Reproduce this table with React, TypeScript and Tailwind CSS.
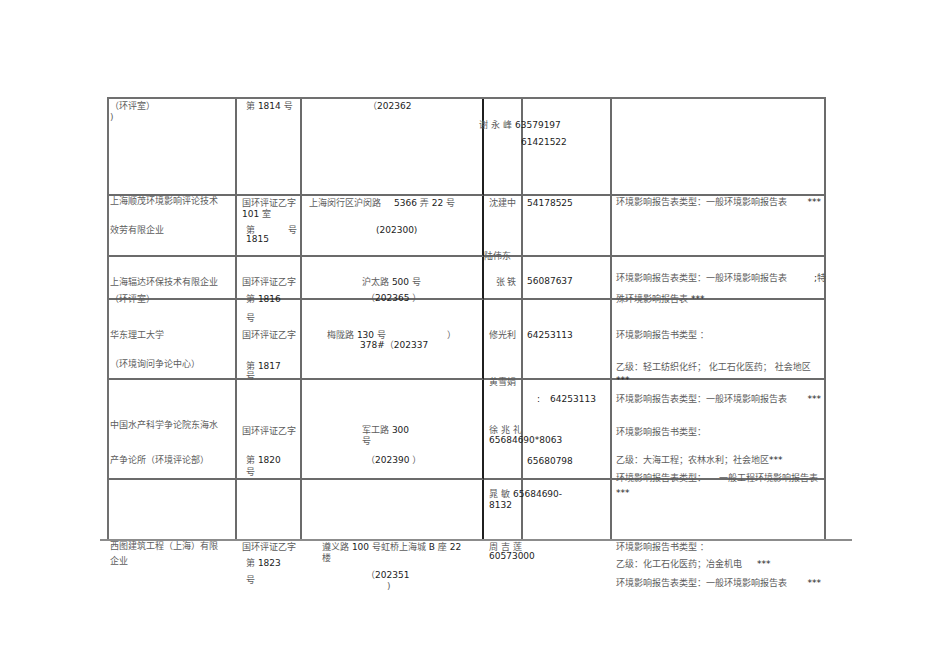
import React from "react";

const N = ({ children }: { children: React.ReactNode }) => (
  <span className="text-[#1c1c1c]">{children}</span>
);

const c = "border-r-2 border-b-2 border-[#6b6b6b]";
const c3 = "border-r-2 border-b-2 border-b-[#6b6b6b] border-r-[#1f1f1f]";
const r6 = "border-r-2 border-[#6b6b6b]";
const r63 = "border-r-2 border-r-[#1f1f1f]";

export default function App() {
  return (
    <div className="w-[950px] h-[672px] bg-white overflow-hidden font-['DejaVu_Sans','Noto_Sans_CJK_SC',sans-serif] text-[9px] leading-[11px] text-[#5c5c5c] whitespace-nowrap">
      <div className="pt-[97px] pl-[107px]">
        <div className="w-[719px] border-l-2 border-t-2 border-[#707070] grid grid-cols-[128px_65px_182px_39px_89px_214px] grid-rows-[97px_61px_43px_80px_100px_59px]">
          {/* Row 1 */}
          <div className={c}>
            <div className="pl-[1px] pt-[2px]">
              <div>（环评室）</div>
              <div>)</div>
            </div>
          </div>
          <div className={c}>
            <div className="pl-[9px] pt-[2px]">
              第 <N>1814</N> 号
            </div>
          </div>
          <div className={c3}>
            <div className="pl-[66px] pt-[2px]">
              （<N>202362</N>
            </div>
          </div>
          <div className={c}>
            <div className="ml-[-5px] mt-[21px] flex">
              <span className="w-[42px] tracking-[3px]">谢永峰</span>
              <N>63579197</N>
            </div>
            <div className="ml-[37px] mt-[6px]">
              <N>61421522</N>
            </div>
          </div>
          <div className={c}></div>
          <div className={c}></div>

          {/* Row 2 */}
          <div className={c}>
            <div className="pl-[1px]">
              <div>上海顺茂环境影响评论技术</div>
              <div className="mt-[18px]">效劳有限企业</div>
            </div>
          </div>
          <div className={c}>
            <div className="pl-[5px] pt-[2px]">
              <div>国环评证乙字</div>
              <div>
                <N>101</N> 室
              </div>
              <div className="ml-[4px] mt-[5px] w-[51px] flex justify-between">
                <span>第</span>
                <span>号</span>
              </div>
              <div className="ml-[4px] mt-[-2px]">
                <N>1815</N>
              </div>
            </div>
          </div>
          <div className={c3}>
            <div className="pt-[2px]">
              <div className="pl-[7px] flex">
                <span>上海闵行区沪闵路</span>
                <span className="ml-[13px]">
                  <N>5366</N> 弄 <N>22</N> 号
                </span>
              </div>
              <div className="pl-[74px] mt-[16px]">
                <N>(202300)</N>
              </div>
            </div>
          </div>
          <div className={c}>
            <div className="pl-[5px] pt-[2px]">沈建中</div>
          </div>
          <div className={c}>
            <div className="pl-[4px] pt-[2px]">
              <N>54178525</N>
            </div>
          </div>
          <div className={c}>
            <div className="pl-[4px] pt-[1px]">
              <div className="w-[205px] flex justify-between">
                <span>环境影响报告表类型：一般环境影响报告表</span>
                <N>***</N>
              </div>
            </div>
          </div>

          {/* Row 3 */}
          <div className={c}>
            <div className="pl-[1px] pt-[20px]">
              <div>上海辐达环保技术有限企业</div>
              <div className="mt-[6px]">（环评室）</div>
            </div>
          </div>
          <div className={c}>
            <div className="pl-[5px] pt-[20px]">
              <div>国环评证乙字</div>
              <div className="ml-[4px] mt-[6px]">
                第 <N>1816</N>
              </div>
            </div>
          </div>
          <div className={c3}>
            <div className="pt-[20px]">
              <div className="pl-[60px]">
                沪太路 <N>500</N> 号
              </div>
              <div className="pl-[64px] mt-[5px]">
                （<N>202365</N> ）
              </div>
            </div>
          </div>
          <div className={c}>
            <div className="mt-[-6px]">陆伟东</div>
            <div className="pl-[12px] mt-[15px] tracking-[2px]">张铁</div>
          </div>
          <div className={c}>
            <div className="pl-[4px] pt-[19px]">
              <N>56087637</N>
            </div>
          </div>
          <div className={c}>
            <div className="pl-[4px] pt-[16px]">
              <div className="w-[210px] flex justify-between">
                <span>环境影响报告表类型：一般环境影响报告表</span>
                <span>
                  <N>;</N>特
                </span>
              </div>
              <div className="mt-[10px]">
                殊环境影响报告表 <N>***</N>
              </div>
            </div>
          </div>

          {/* Row 4 */}
          <div className={c}>
            <div className="pl-[1px] pt-[30px]">
              <div>华东理工大学</div>
              <div className="mt-[18px]">（环境询问争论中心）</div>
            </div>
          </div>
          <div className={c}>
            <div className="pl-[9px] pt-[13px]">
              <div>号</div>
              <div className="ml-[-4px] mt-[6px]">国环评证乙字</div>
              <div className="mt-[20px]">
                第 <N>1817</N>
              </div>
              <div className="mt-[-1px]">号</div>
            </div>
          </div>
          <div className={c3}>
            <div className="pt-[30px]">
              <div className="ml-[25px] w-[129px] flex justify-between">
                <span>
                  梅陇路 <N>130</N> 号
                </span>
                <span>）</span>
              </div>
              <div className="pl-[58px] mt-[-1px]">
                <N>378#</N>（<N>202337</N>
              </div>
            </div>
          </div>
          <div className={c}>
            <div className="pl-[5px] pt-[30px]">修光利</div>
          </div>
          <div className={c}>
            <div className="pl-[4px] pt-[30px]">
              <N>64253113</N>
            </div>
          </div>
          <div className={c}>
            <div className="pl-[4px] pt-[30px]">
              <div>环境影响报告书类型 ：</div>
              <div className="mt-[21px]">乙级：轻工纺织化纤； 化工石化医药； 社会地区</div>
              <div className="mt-[2px]">
                <N>***</N>
              </div>
            </div>
          </div>

          {/* Row 5 */}
          <div className={c}>
            <div className="pl-[1px] pt-[40px]">
              <div>中国水产科学争论院东海水</div>
              <div className="mt-[24px]">产争论所（环境评论部）</div>
            </div>
          </div>
          <div className={c}>
            <div className="pl-[5px] pt-[46px]">
              <div>国环评证乙字</div>
              <div className="ml-[4px] mt-[18px]">
                第 <N>1820</N>
              </div>
              <div className="ml-[4px] mt-[1px]">号</div>
            </div>
          </div>
          <div className={c3}>
            <div className="pl-[60px] pt-[45px]">
              <div>
                军工路 <N>300</N>
              </div>
              <div>号</div>
              <div className="ml-[4px] mt-[8px]">
                （<N>202390</N> ）
              </div>
            </div>
          </div>
          <div className={c}>
            <div className="pl-[5px]">
              <div className="mt-[-3px]">黄雪娟</div>
              <div className="mt-[37px] tracking-[3px]">徐兆礼</div>
              <div className="mt-[-1px]">
                <N>65684690*8063</N>
              </div>
            </div>
          </div>
          <div className={c}>
            <div className="pt-[14px]">
              <div className="pl-[14px] flex">
                <N>:</N>
                <span className="ml-[10px]">
                  <N>64253113</N>
                </span>
              </div>
              <div className="pl-[4px] mt-[51px]">
                <N>65680798</N>
              </div>
            </div>
          </div>
          <div className={c}>
            <div className="pl-[4px] pt-[14px]">
              <div className="w-[205px] flex justify-between">
                <span>环境影响报告表类型：一般环境影响报告表</span>
                <N>***</N>
              </div>
              <div className="mt-[22px]">环境影响报告书类型：</div>
              <div className="mt-[17px]">
                乙级：大海工程；农林水利；社会地区<N>***</N>
              </div>
              <div className="mt-[7px] flex">
                <span>环境影响报告表类型：</span>
                <span className="ml-[13px]">一般工程环境影响报告表</span>
              </div>
            </div>
          </div>

          {/* Row 6 */}
          <div className={r6}></div>
          <div className={r6}></div>
          <div className={r63}></div>
          <div className={r6}>
            <div className="pl-[5px] pt-[9px]">
              <div className="flex">
                <span className="w-[29px] tracking-[3px]">晁敏</span>
                <N>65684690-</N>
              </div>
              <div>
                <N>8132</N>
              </div>
            </div>
          </div>
          <div className={r6}></div>
          <div className={r6}>
            <div className="pl-[4px] pt-[8px]">
              <N>***</N>
            </div>
          </div>
        </div>

        <div className="ml-[-7px] h-[2px] w-[752px] bg-[#8c8c8c]" />

        <div className="ml-[2px] grid grid-cols-[128px_65px_182px_39px_89px_214px]">
          <div>
            <div className="pl-[1px]">
              <div>西图建筑工程（上海）有限</div>
              <div className="mt-[4px]">企业</div>
            </div>
          </div>
          <div>
            <div className="pl-[5px] pt-[1px]">
              <div>国环评证乙字</div>
              <div className="ml-[4px] mt-[5px]">
                第 <N>1823</N>
              </div>
              <div className="ml-[4px] mt-[6px]">号</div>
            </div>
          </div>
          <div>
            <div className="pt-[1px]">
              <div className="pl-[20px]">
                遵义路 <N>100</N> 号虹桥上海城 <N>B</N> 座 <N>22</N>
              </div>
              <div className="pl-[20px]">楼</div>
              <div className="pl-[64px] mt-[6px]">
                （<N>202351</N>
              </div>
              <div className="pl-[85px]">)</div>
            </div>
          </div>
          <div>
            <div className="pl-[5px] pt-[1px]">
              <div className="tracking-[3px]">周吉莲</div>
              <div className="mt-[-2px]">
                <N>60573000</N>
              </div>
            </div>
          </div>
          <div></div>
          <div>
            <div className="pl-[4px] pt-[1px]">
              <div>环境影响报告书类型 ：</div>
              <div className="mt-[6px]">
                乙级：化工石化医药；冶金机电
                <span className="ml-[15px]">
                  <N>***</N>
                </span>
              </div>
              <div className="mt-[8px] w-[205px] flex justify-between">
                <span>环境影响报告表类型：一般环境影响报告表</span>
                <N>***</N>
              </div>
            </div>
          </div>
        </div>
      </div>
    </div>
  );
}
